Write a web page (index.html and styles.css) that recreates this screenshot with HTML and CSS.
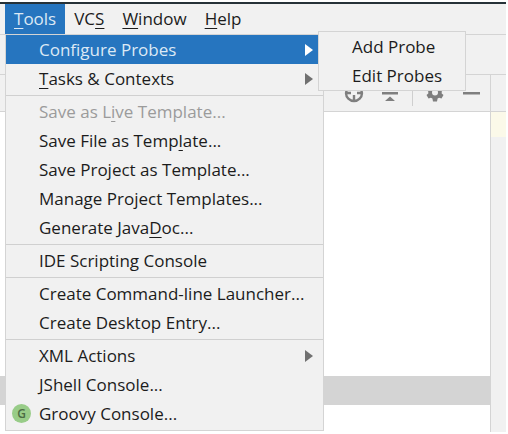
FILE: index.html
```html
<!DOCTYPE html>
<html lang="en">
<head>
<meta charset="utf-8">
<title>Tools menu</title>
<link rel="stylesheet" href="styles.css">
</head>
<body>
<div class="window">
  <nav class="menubar" aria-label="Main menu">
    <div class="menubar-entry">
      <button class="menubar-button is-open" type="button"><u>T</u>ools</button>
      <div class="menu menu-tools">
        <button class="item is-active" type="button">Configure Probes<span class="arrow"></span></button>
        <button class="item" type="button"><span><u>T</u>asks &amp; Contexts</span><span class="arrow"></span></button>
        <hr class="rule">
        <button class="item" type="button" disabled><span>Save as L<u>i</u>ve Template...</span></button>
        <button class="item" type="button"><span>Save File as Temp<u>l</u>ate...</span></button>
        <button class="item" type="button">Save Project as Template...</button>
        <button class="item" type="button">Manage Project Templates...</button>
        <button class="item" type="button"><span>Generate Java<u>D</u>oc...</span></button>
        <hr class="rule">
        <button class="item" type="button">IDE Scripting Console</button>
        <hr class="rule">
        <button class="item" type="button">Create Command-line Launcher...</button>
        <button class="item" type="button">Create Desktop Entry...</button>
        <hr class="rule">
        <button class="item" type="button">XML Actions<span class="arrow"></span></button>
        <button class="item" type="button">JShell Console...</button>
        <button class="item" type="button"><span class="badge">G</span>Groovy Console...</button>
        <div class="menu menu-sub">
          <button class="item" type="button">Add Probe</button>
          <button class="item" type="button">Edit Probes</button>
        </div>
      </div>
    </div>
    <button class="menubar-button" type="button">VC<u>S</u></button>
    <button class="menubar-button" type="button"><u>W</u>indow</button>
    <button class="menubar-button" type="button"><u>H</u>elp</button>
  </nav>
  <div class="toolbar"></div>
  <main class="workspace">
    <section class="panel">
      <header class="panel-header">
        <button class="tool" type="button" aria-label="Locate">
          <svg width="20" height="20" viewBox="0 0 20 20"><circle cx="10" cy="10" r="8" fill="none" stroke="#7f7f7f" stroke-width="2.400"/><path d="M10 1v6M10 12v6M1 10h6M13 10h6" stroke="#7f7f7f" stroke-width="2.400"/></svg>
        </button>
        <button class="tool" type="button" aria-label="Collapse all">
          <svg width="20" height="20" viewBox="0 0 20 20"><path d="M2 9h16v2.500H2zM10 13.500l5 4.500H5zM10 7l4-4H6z" fill="#7f7f7f"/></svg>
        </button>
        <span class="divider"></span>
        <button class="tool" type="button" aria-label="Settings">
          <svg width="20" height="20" viewBox="0 0 20 20"><path fill="#7f7f7f" fill-rule="evenodd" d="M8 1h4l.6 2.400 1.500.9 2.400-.8 2 3.500-1.800 1.600v1.800l1.800 1.600-2 3.500-2.400-.8-1.500.9L12 18.500H8l-.6-2.900-1.500-.9-2.400.8-2-3.500 1.800-1.600V8.600L1.500 7l2-3.500 2.400.8 1.500-.9zM10 6.500a3 3 0 1 0 0 6 3 3 0 0 0 0-6z"/></svg>
        </button>
        <button class="tool" type="button" aria-label="Hide">
          <svg width="20" height="20" viewBox="0 0 20 20"><path d="M2 9h17v2.500H2z" fill="#7f7f7f"/></svg>
        </button>
      </header>
      <div class="tree"><div class="tree-selection"></div></div>
    </section>
    <aside class="editor">
      <div class="editor-tabs"></div>
      <div class="editor-line"></div>
    </aside>
  </main>
</div>
</body>
</html>
```

FILE: styles.css
```css
* { box-sizing: border-box; }

body {
  margin: 0;
  background: #fff;
  color: #1c1c1c;
  font: 17px/28px "Open Sans", "Noto Sans", sans-serif;
}

button {
  margin: 0;
  border: 0;
  background: none;
  color: inherit;
  font: inherit;
}

u {
  text-decoration-thickness: 1px;
  text-underline-offset: 3px;
}

.window {
  display: flex;
  flex-direction: column;
  height: 100vh;
  padding: 2px 2px 2px 0;
}

.menubar {
  display: flex;
  height: 33px;
  padding-left: 5px;
  border-top: 2px solid #263238;
  border-bottom: 1px solid #d4d4d4;
  background: #f1f1f1;
}

.menubar-entry { position: relative; }

.menubar-button {
  height: 30px;
  padding: 0 9px;
}

.menubar-button.is-open {
  background: #2675bf;
  color: #dce9f5;
}

.menu {
  position: absolute;
  border: 1px solid #d4d4d4;
  background: #f1f1f1;
}

.menu-tools {
  top: 30px;
  left: 0;
  z-index: 1;
  width: 319px;
  padding-bottom: 2px;
}

.menu-sub {
  top: -4px;
  left: 312px;
  width: 148px;
}

.item {
  display: flex;
  align-items: center;
  justify-content: space-between;
  position: relative;
  width: 100%;
  height: 29px;
  padding: 0 10px 0 33px;
  text-align: left;
  white-space: nowrap;
}

.item:disabled { color: #9b9b9b; }

.item.is-active {
  background: #2675bf;
  color: #dce9f5;
}

.arrow {
  border: solid transparent;
  border-width: 6px 0 6px 8px;
  border-left-color: #707070;
}

.is-active .arrow { border-left-color: #fff; }

.rule {
  height: 4px;
  margin: 0;
  border: solid #f1f1f1;
  border-width: 2px 0 1px;
  background: #d0d0d0;
}

.badge {
  position: absolute;
  left: 6px;
  width: 19px;
  height: 19px;
  border-radius: 50%;
  background: #98cc88;
  color: #4b6b43;
  font-size: 12px;
  font-weight: 600;
  line-height: 19px;
  text-align: center;
}

.toolbar {
  height: 40px;
  border-bottom: 1px solid #d4d4d4;
  background: #f1f1f1;
}

.workspace {
  display: flex;
  flex: 1;
}

.panel {
  display: flex;
  flex: 1;
  flex-direction: column;
}

.panel-header {
  display: flex;
  align-items: center;
  justify-content: flex-end;
  gap: 16px;
  height: 37px;
  padding-right: 9px;
  border-bottom: 1px solid #d4d4d4;
  background: #f1f1f1;
}

.tool {
  width: 20px;
  height: 20px;
  padding: 0;
}

.tool svg { display: block; }

.divider {
  width: 1px;
  height: 26px;
  margin: 0 -4px;
  background: #cfcfcf;
}

.tree {
  flex: 1;
  padding-top: 264px;
}

.tree-selection {
  height: 29px;
  background: #d4d4d4;
}

.editor {
  width: 16px;
  border-left: 1px solid #d4d4d4;
  background: #f1f1f1;
}

.editor-tabs {
  height: 37px;
  border-bottom: 1px solid #d4d4d4;
}

.editor-line {
  height: 25px;
  background: #fbf9e9;
}
```
